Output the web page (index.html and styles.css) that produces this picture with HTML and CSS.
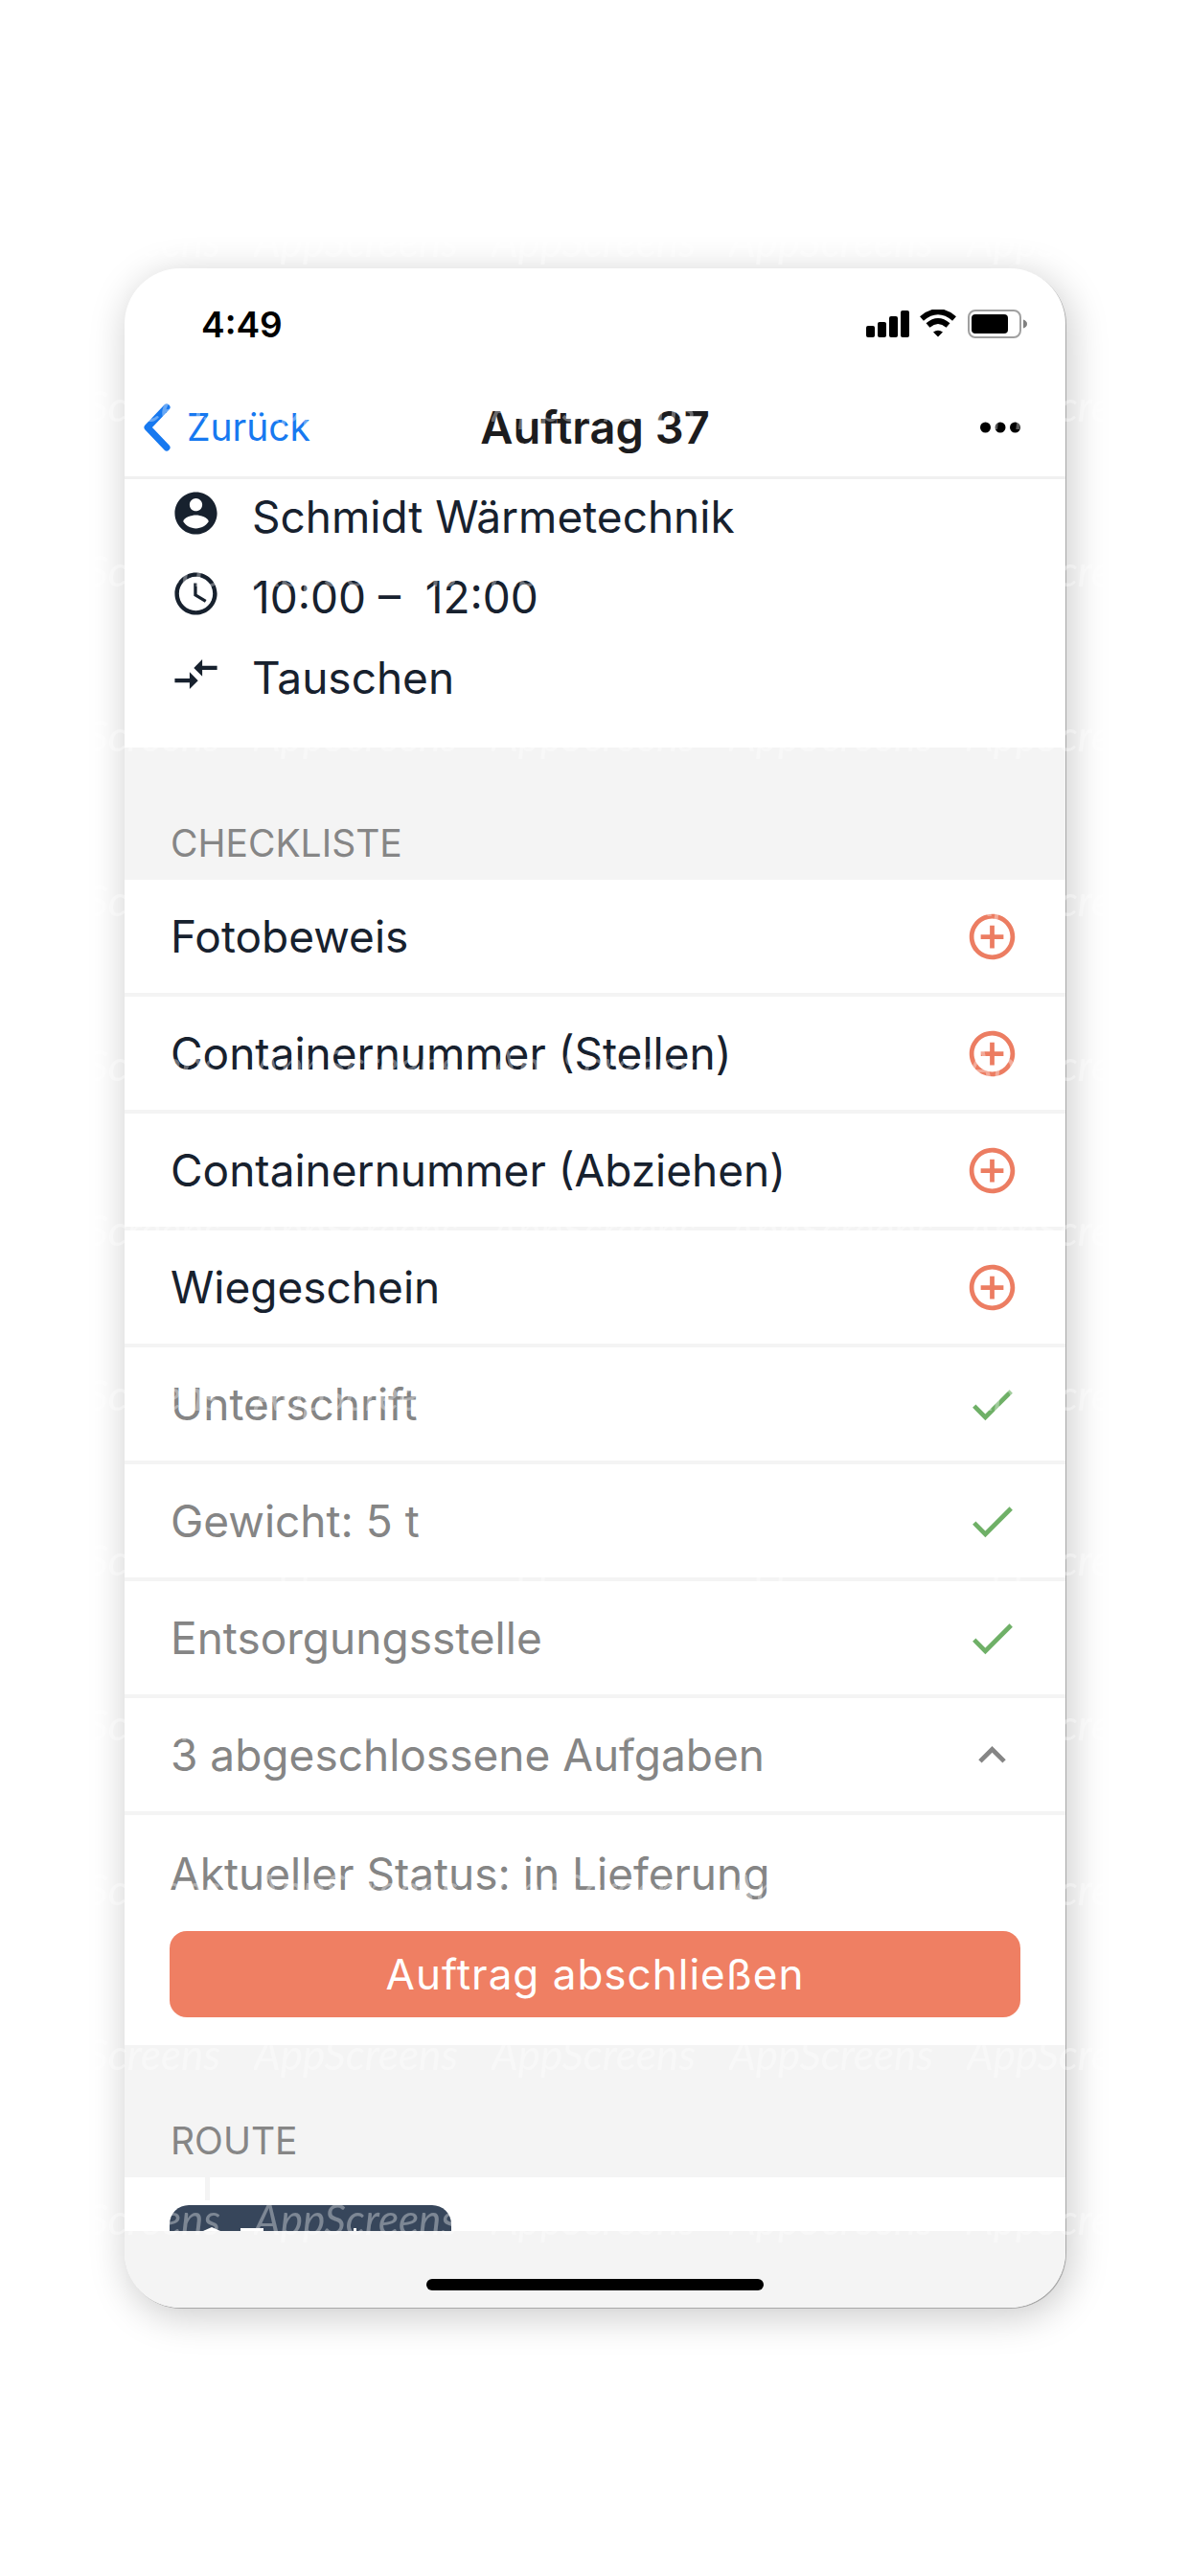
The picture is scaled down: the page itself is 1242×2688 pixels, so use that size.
FILE: index.html
```html
<!DOCTYPE html>
<html lang="de">
<head>
    <meta charset="UTF-8">
    <meta name="viewport" content="width=device-width, initial-scale=1.0">
    <title>Auftrag 37</title>
    <link rel="stylesheet" href="styles.css">
</head>
<body>
    <div class="phone">
        <!-- Status bar -->
        <div class="status-bar">
            <span class="time">4:49</span>
            <svg class="status-icons" viewBox="0 0 170 32" aria-hidden="true">
                <rect x="0" y="17" width="9" height="12" rx="2"/>
                <rect x="12" y="13" width="9" height="16" rx="2"/>
                <rect x="24" y="7" width="9" height="22" rx="2"/>
                <rect x="36" y="1" width="9" height="28" rx="2"/>
                <path d="M58 9.500Q75 -5 92 9.500" fill="none" stroke="#000" stroke-width="6"/>
                <path d="M64.500 16.500Q75 7.500 85.500 16.500" fill="none" stroke="#000" stroke-width="6"/>
                <path d="M70 23.500Q75 20 80 23.500L75 28.500z"/>
                <rect x="107" y="1" width="54" height="28" rx="7" fill="none" stroke="#a0a0a0" stroke-width="2"/>
                <rect x="110" y="5" width="38" height="20" rx="4"/>
                <path d="M164 10.500q4 1.500 4 4.500t-4 4.500z" fill="#808080"/>
            </svg>
        </div>

        <!-- Navigation -->
        <header class="nav">
            <a class="back" href="#">
                <svg viewBox="0 0 30 50" aria-hidden="true"><path d="M25 4L5 25l20 21"/></svg>
                Zurück
            </a>
            <h1>Auftrag 37</h1>
            <button class="more" aria-label="Mehr">
                <svg viewBox="0 0 42 12" aria-hidden="true"><circle cx="5.500" cy="6" r="5.500"/><circle cx="21" cy="6" r="5.500"/><circle cx="36.500" cy="6" r="5.500"/></svg>
            </button>
        </header>

        <!-- Order info -->
        <ul class="info">
            <li>
                <svg viewBox="0 0 24 24" aria-hidden="true"><path d="M12 2C6.480 2 2 6.480 2 12s4.480 10 10 10 10-4.480 10-10S17.520 2 12 2zm0 3c1.660 0 3 1.340 3 3s-1.340 3-3 3-3-1.340-3-3 1.340-3 3-3zm0 14.200c-2.500 0-4.710-1.280-6-3.220.030-1.990 4-3.080 6-3.080 1.990 0 5.970 1.090 6 3.080-1.290 1.940-3.500 3.220-6 3.220z"/></svg>
                <span>Schmidt Wärmetechnik</span>
            </li>
            <li>
                <svg viewBox="0 0 24 24" aria-hidden="true"><path d="M11.990 2C6.470 2 2 6.480 2 12s4.470 10 9.990 10C17.520 22 22 17.520 22 12S17.520 2 11.990 2zM12 20c-4.420 0-8-3.580-8-8s3.580-8 8-8 8 3.580 8 8-3.580 8-8 8zM12.500 7H11v6l5.250 3.150.750-1.230-4.500-2.670z"/></svg>
                <span>10:00 –&nbsp; 12:00</span>
            </li>
            <li>
                <svg viewBox="0 0 24 24" aria-hidden="true"><path d="M9.010 14H2v2h7.010v3L13 15l-3.990-4v3zm5.980-1v-3H22V8h-7.010V5L11 9l3.990 4z"/></svg>
                <span>Tauschen</span>
            </li>
        </ul>

        <!-- Checklist -->
        <h2 class="section-title">CHECKLISTE</h2>
        <ul class="checklist">
            <li>
                <span>Fotobeweis</span>
                <button class="add" aria-label="Fotobeweis hinzufügen"><svg viewBox="0 0 24 24"><use href="#icon-add"/></svg></button>
            </li>
            <li>
                <span>Containernummer (Stellen)</span>
                <button class="add" aria-label="Containernummer (Stellen) hinzufügen"><svg viewBox="0 0 24 24"><use href="#icon-add"/></svg></button>
            </li>
            <li>
                <span>Containernummer (Abziehen)</span>
                <button class="add" aria-label="Containernummer (Abziehen) hinzufügen"><svg viewBox="0 0 24 24"><use href="#icon-add"/></svg></button>
            </li>
            <li>
                <span>Wiegeschein</span>
                <button class="add" aria-label="Wiegeschein hinzufügen"><svg viewBox="0 0 24 24"><use href="#icon-add"/></svg></button>
            </li>
            <li class="done">
                <span>Unterschrift</span>
                <svg viewBox="0 0 24 24" aria-hidden="true"><use href="#icon-check"/></svg>
            </li>
            <li class="done">
                <span>Gewicht: 5 t</span>
                <svg viewBox="0 0 24 24" aria-hidden="true"><use href="#icon-check"/></svg>
            </li>
            <li class="done">
                <span>Entsorgungsstelle</span>
                <svg viewBox="0 0 24 24" aria-hidden="true"><use href="#icon-check"/></svg>
            </li>
            <li class="done">
                <span>3 abgeschlossene Aufgaben</span>
                <button class="toggle" aria-label="Einklappen"><svg viewBox="0 0 24 24"><path d="M12 8l-6 6 1.410 1.410L12 10.830l4.590 4.580L18 14z"/></svg></button>
            </li>
        </ul>
        <div class="order-status">
            <p>Aktueller Status: in Lieferung</p>
            <button class="finish">Auftrag abschließen</button>
        </div>

        <!-- Route, scrolled under the home area -->
        <h2 class="section-title">ROUTE</h2>
        <div class="route">
            <div class="route-line"></div>
            <button class="route-start" aria-label="Route">
                <svg viewBox="0 0 294 27" aria-hidden="true"><path d="M35 27l9-4 9 4zM74 24h24v3H74zM192 24h3v3h-3z"/></svg>
            </button>
        </div>
        <div class="home-area"><div class="home-bar"></div></div>
    </div>

    <!-- Watermark tiles -->
    <svg class="watermark" aria-hidden="true">
        <defs>
            <pattern id="mark" x="17" y="60" width="248" height="172" patternUnits="userSpaceOnUse">
                <text x="0" y="36">AppScreens</text>
            </pattern>
        </defs>
        <rect width="100%" height="100%" fill="url(#mark)"/>
    </svg>

    <svg class="sprite" aria-hidden="true">
        <symbol id="icon-add" viewBox="0 0 24 24"><path d="M13 7h-2v4H7v2h4v4h2v-4h4v-2h-4V7zm-1-5C6.480 2 2 6.480 2 12s4.480 10 10 10 10-4.480 10-10S17.520 2 12 2zm0 18c-4.410 0-8-3.590-8-8s3.590-8 8-8 8 3.590 8 8-3.590 8-8 8z"/></symbol>
        <symbol id="icon-check" viewBox="0 0 24 24"><path d="M9 16.200L4.800 12l-1.400 1.400L9 19 21 7l-1.400-1.400L9 16.200z"/></symbol>
    </svg>
</body>
</html>
```
FILE: styles.css
```css
* { box-sizing: border-box; }
body { margin: 0; padding: 280px 130px; position: relative; background: #fff; color: #17212e; font-family: Inter, "Liberation Sans", sans-serif; font-size: 46px; line-height: 60px; }
h1, h2, p, ul { margin: 0; padding: 0; font-weight: 400; }
ul { list-style: none; }
button { padding: 0; border: none; background: none; font-family: inherit; cursor: pointer; }
svg { display: block; flex: none; }
.phone { background: #fff; border-radius: 58px; overflow: hidden; box-shadow: 1px 1px 0 #a8a8a8, 4px 8px 40px rgba(0, 0, 0, 0.22); }

/* Status bar and navigation */
.status-bar { display: flex; justify-content: space-between; align-items: center; height: 118px; padding: 0 38px 0 80px; color: #000; }
.time { font-size: 37px; font-weight: 600; }
.status-icons { width: 170px; height: 32px; }
.nav { display: grid; grid-template-columns: 1fr auto 1fr; align-items: center; height: 102px; padding: 0 19px 4px; border-bottom: 3px solid #f0f0f0; }
.back { display: flex; align-items: center; gap: 16px; color: #1779f0; font-size: 39px; text-decoration: none; }
.back svg { width: 30px; height: 50px; fill: none; stroke: #1779f0; stroke-width: 7; stroke-linecap: round; stroke-linejoin: round; }
.nav h1 { color: #1c1c1e; font-size: 47px; font-weight: 600; }
.more { justify-self: end; margin-right: 28px; }
.more svg { width: 42px; height: 12px; }

/* Order info */
.info { display: flex; flex-direction: column; gap: 24px; padding: 9px 48px 43px; }
.info li { display: flex; align-items: flex-start; gap: 32px; }
.info svg { width: 53px; height: 53px; fill: #17212e; }

/* Checklist */
.section-title { padding: 70px 48px 8px; background: #f4f4f4; color: #868686; font-size: 39px; }
.checklist li { display: flex; justify-content: space-between; align-items: center; height: 122px; padding: 0 48px; border-bottom: 4px solid #f4f4f4; }
.checklist svg { width: 57px; height: 57px; }
.add svg { fill: #ec7d62; }
.done { color: #858585; }
.done > svg { fill: #6fb067; }
.toggle svg { fill: #858585; }
.order-status { padding: 31px 47px 29px; color: #858585; }
.finish { display: block; width: 100%; height: 90px; margin-top: 30px; border-radius: 18px; background: #ef7f63; color: #fff; font-size: 44px; letter-spacing: 1px; }

/* Route */
.route { height: 56px; padding: 0 47px; overflow: hidden; }
.route-line { width: 5px; height: 24px; margin: 0 37px 5px; background: #f4f4f4; }
.route-start { display: flex; align-items: flex-start; width: 294px; height: 90px; border-radius: 20px; background: #37465b; }
.route-start svg { width: 294px; height: 27px; fill: #fff; }
.home-area { display: flex; justify-content: center; padding: 50px 0 18px; background: #f4f4f4; }
.home-bar { width: 352px; height: 12px; border-radius: 6px; background: #000; }

/* Watermark lies over the whole page */
.watermark { position: absolute; top: 0; left: 0; width: 100%; height: 100%; pointer-events: none; }
.watermark text { fill: #fff; fill-opacity: 0.35; font-family: Lato, sans-serif; font-size: 44px; font-style: italic; }
.sprite { position: absolute; width: 0; height: 0; }
```
